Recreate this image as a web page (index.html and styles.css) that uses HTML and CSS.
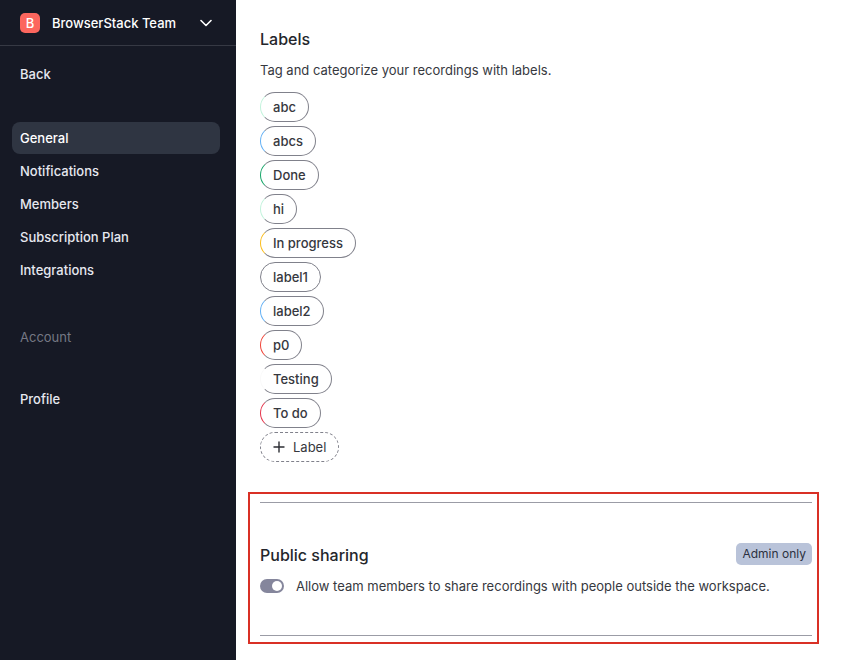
FILE: index.html
```
<!DOCTYPE html>
<html lang="en">

<head>
    <meta charset="UTF-8">
    <meta name="viewport" content="width=device-width, initial-scale=1.0">
    <title>Workspace settings</title>
    <link rel="stylesheet" href="styles.css">
</head>

<body>
    <aside class="sidebar">
        <button type="button" class="team">
            <span class="logo">B</span>
            <span class="team-name">BrowserStack Team</span>
            <svg width="12" height="8" viewBox="0 0 12 8" fill="none" stroke="#fff" stroke-width="1.6" stroke-linecap="round" stroke-linejoin="round">
                <path d="M1 1.5l5 5 5-5" />
            </svg>
        </button>
        <nav class="menu">
            <a href="#" class="back">Back</a>
            <a href="#" class="current">General</a>
            <a href="#">Notifications</a>
            <a href="#">Members</a>
            <a href="#">Subscription Plan</a>
            <a href="#">Integrations</a>
            <p class="group">Account</p>
            <a href="#">Profile</a>
        </nav>
    </aside>
    <main class="content">
        <section class="labels">
            <h2>Labels</h2>
            <p class="desc">Tag and categorize your recordings with labels.</p>
            <ul class="list">
                <li><button type="button" class="label mint">abc</button></li>
                <li><button type="button" class="label blue">abcs</button></li>
                <li><button type="button" class="label green">Done</button></li>
                <li><button type="button" class="label mint">hi</button></li>
                <li><button type="button" class="label yellow">In progress</button></li>
                <li><button type="button" class="label">label1</button></li>
                <li><button type="button" class="label blue">label2</button></li>
                <li><button type="button" class="label red">p0</button></li>
                <li><button type="button" class="label white">Testing</button></li>
                <li><button type="button" class="label crimson">To do</button></li>
                <li>
                    <button type="button" class="label add">
                        <svg width="12" height="12" viewBox="0 0 12 12" stroke="#2b2d33" stroke-width="1.4" stroke-linecap="round">
                            <path d="M6 1v10M1 6h10" />
                        </svg>
                        Label
                    </button>
                </li>
            </ul>
        </section>
        <div class="highlight">
            <section class="sharing">
                <div class="heading">
                    <h2>Public sharing</h2>
                    <span class="tag">Admin only</span>
                </div>
                <div class="option">
                    <input type="checkbox" id="share" class="switch" checked>
                    <label for="share">Allow team members to share recordings with people outside the workspace.</label>
                </div>
            </section>
        </div>
    </main>
</body>

</html>
```

FILE: styles.css
```
* {
    margin: 0;
    padding: 0;
    box-sizing: border-box;
}

body {
    display: flex;
    min-height: 100vh;
    font-family: Inter, "Liberation Sans", sans-serif;
    font-size: 13px;
    line-height: 20px;
    color: #36383e;
    background: #fff;
}

button {
    font: inherit;
    color: inherit;
    background: none;
    border: none;
    cursor: pointer;
}

/* sidebar */
.sidebar {
    flex: none;
    width: 236px;
    background: #161925;
    color: #e6e8f0;
    font-weight: 500;
}

.team {
    display: flex;
    align-items: center;
    gap: 12px;
    width: 100%;
    height: 46px;
    padding: 0 24px 0 20px;
    border-bottom: 1px solid #363944;
    text-align: left;
    white-space: nowrap;
    color: #fff;
}

.team svg {
    flex: none;
    margin-left: auto;
}

.logo {
    flex: none;
    width: 20px;
    height: 20px;
    border-radius: 5px;
    background: #fc665e;
    text-align: center;
}

.menu {
    display: flex;
    flex-direction: column;
    gap: 1px;
    padding: 12px 16px 12px 12px;
}

.menu a {
    padding: 6px 8px;
    border-radius: 8px;
    color: inherit;
    text-decoration: none;
}

.menu .back {
    margin-bottom: 31px;
}

.menu .current {
    background: #2f3542;
    color: #fff;
}

.group {
    padding: 40px 8px 35px;
    color: #757884;
    font-weight: 400;
}

/* content */
.content {
    flex: 1;
    padding: 27px 31px 16px 12px;
}

h2 {
    font-size: 16px;
    line-height: 24px;
    font-weight: 500;
    color: #24262b;
}

.labels {
    padding: 0 12px;
}

.desc {
    margin: 9px 0 12px;
}

.list {
    display: grid;
    gap: 4px;
    list-style: none;
}

.list li {
    display: flex;
}

.label {
    height: 30px;
    padding: 0 12px;
    border: 1px solid #80818b;
    border-radius: 15px;
    font-weight: 500;
}

.mint {
    border-left-color: #c2f3dc;
}

.blue {
    border-left-color: #62b0f5;
}

.green {
    border-left-color: #17a669;
}

.yellow {
    border-left-color: #fbbd1c;
}

.red {
    border-left-color: #f04438;
}

.white {
    border-left-color: #fafafa;
}

.crimson {
    border-left-color: #e5344b;
}

.add {
    display: flex;
    align-items: center;
    gap: 8px;
    border-style: dashed;
    font-weight: 400;
}

.highlight {
    margin-top: 30px;
    padding: 8px 5px 6px 10px;
    border: 2px solid #d93025;
}

.sharing {
    padding: 40px 0 39px;
    border-top: 1px solid #9b9ca6;
    border-bottom: 1px solid #9b9ca6;
}

.heading {
    display: flex;
    align-items: flex-start;
    justify-content: space-between;
}

.tag {
    padding: 1px 6px;
    border-radius: 5px;
    background: #b9c3d9;
    color: #2b3040;
    font-size: 12px;
}

.option {
    display: flex;
    align-items: center;
    gap: 12px;
    margin-top: 9px;
}

.switch {
    appearance: none;
    display: flex;
    width: 24px;
    height: 14px;
    padding: 2px;
    border-radius: 7px;
    background: #85869c;
}

.switch::before {
    content: "";
    width: 10px;
    height: 10px;
    border-radius: 50%;
    background: #fff;
}

.switch:checked {
    justify-content: flex-end;
}
```
